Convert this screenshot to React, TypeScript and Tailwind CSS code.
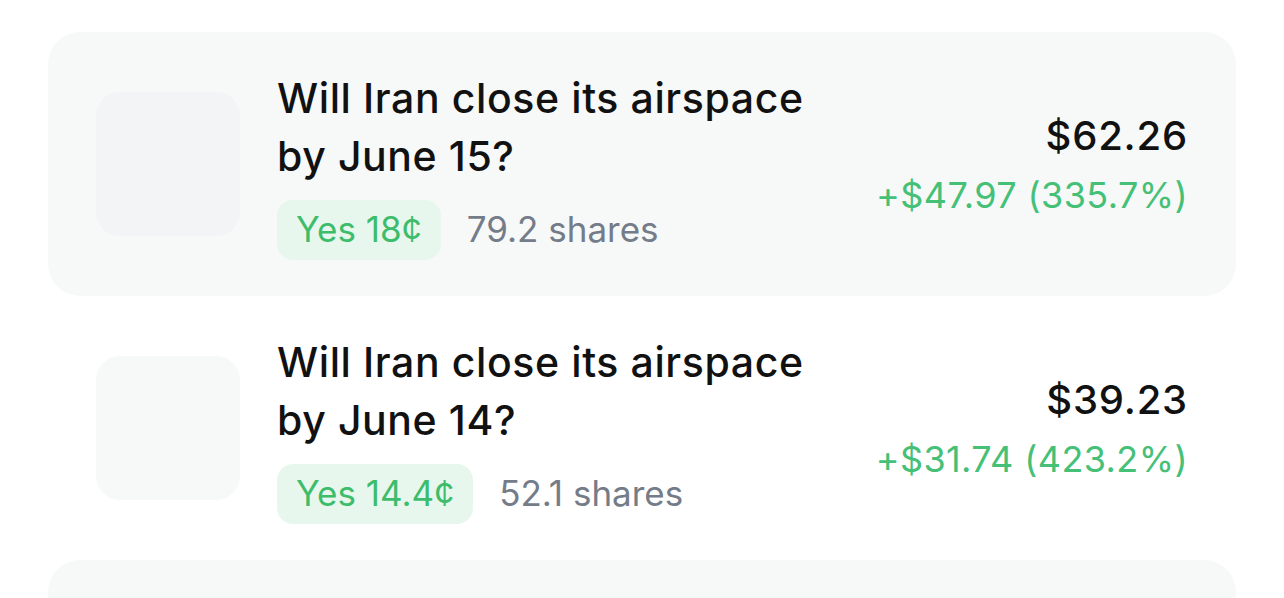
import React from "react";

type Position = {
  title: string;
  outcome: string;
  shares: string;
  value: string;
  change: string;
  shaded: boolean;
};

const positions: Position[] = [
  {
    title: "Will Iran close its airspace by June 15?",
    outcome: "Yes 18¢",
    shares: "79.2 shares",
    value: "$62.26",
    change: "+$47.97 (335.7%)",
    shaded: true,
  },
  {
    title: "Will Iran close its airspace by June 14?",
    outcome: "Yes 14.4¢",
    shares: "52.1 shares",
    value: "$39.23",
    change: "+$31.74 (423.2%)",
    shaded: false,
  },
  {
    title: "Will Iran close its airspace by June 13?",
    outcome: "Yes 11¢",
    shares: "40.0 shares",
    value: "$21.80",
    change: "+$17.40 (395.4%)",
    shaded: true,
  },
];

function PositionRow({ p }: { p: Position }) {
  return (
    <div
      className={
        "flex h-[264px] shrink-0 items-center rounded-[32px] px-12 " +
        (p.shaded ? "bg-[#f7f8f8]" : "bg-white")
      }
    >
      <div
        className={
          "h-[144px] w-[144px] shrink-0 rounded-[24px] " +
          (p.shaded ? "bg-[#f3f4f6]" : "bg-[#f7f8f8]")
        }
      />
      <div className="ml-[37px] flex w-[560px] flex-col">
        <div className="text-[41px] font-medium leading-[58px] tracking-[0.6px] text-[#111111]">
          {p.title}
        </div>
        <div className="mt-[15px] flex items-center">
          <span className="flex h-[60px] items-center rounded-[16px] bg-[#e8f7ee] px-[19px] text-[35px] text-[#3dbd6b]">
            {p.outcome}
          </span>
          <span className="ml-[26px] text-[35px] text-[#747c89]">{p.shares}</span>
        </div>
      </div>
      <div className="ml-auto flex flex-col items-end">
        <div className="text-[40px] font-medium leading-[48px] tracking-[0.8px] text-[#111111]">
          {p.value}
        </div>
        <div className="mt-[13px] text-[36px] leading-[44px] tracking-[0.4px] text-[#45c077]">
          {p.change}
        </div>
      </div>
    </div>
  );
}

export default function App() {
  return (
    <div
      className="h-[598px] w-[1284px] overflow-hidden bg-white px-12 pt-8"
      style={{ fontFamily: "Inter, 'Noto Sans', sans-serif" }}
    >
      <div className="flex flex-col">
        {positions.map((p) => (
          <PositionRow key={p.title} p={p} />
        ))}
      </div>
    </div>
  );
}
